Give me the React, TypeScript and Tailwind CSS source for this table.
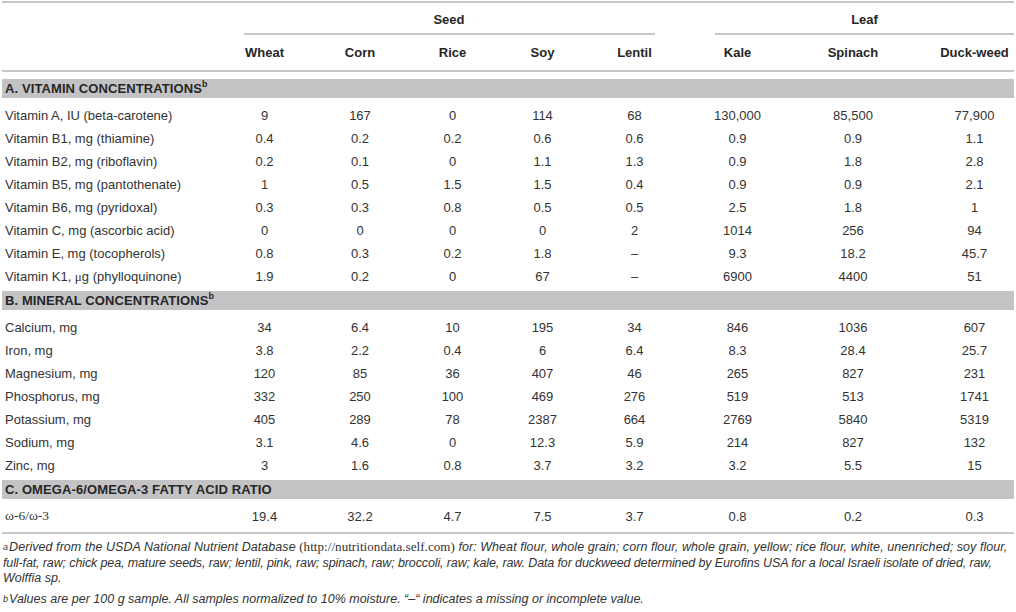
import React from "react";

const COLS = "grid grid-cols-[216px_97px_94px_91px_89px_95px_111px_120px_103px]";

type Row = { label: React.ReactNode; v: string[] };

const vitamins: Row[] = [
  { label: "Vitamin A, IU (beta-carotene)", v: ["9", "167", "0", "114", "68", "130,000", "85,500", "77,900"] },
  { label: "Vitamin B1, mg (thiamine)", v: ["0.4", "0.2", "0.2", "0.6", "0.6", "0.9", "0.9", "1.1"] },
  { label: "Vitamin B2, mg (riboflavin)", v: ["0.2", "0.1", "0", "1.1", "1.3", "0.9", "1.8", "2.8"] },
  { label: "Vitamin B5, mg (pantothenate)", v: ["1", "0.5", "1.5", "1.5", "0.4", "0.9", "0.9", "2.1"] },
  { label: "Vitamin B6, mg (pyridoxal)", v: ["0.3", "0.3", "0.8", "0.5", "0.5", "2.5", "1.8", "1"] },
  { label: "Vitamin C, mg (ascorbic acid)", v: ["0", "0", "0", "0", "2", "1014", "256", "94"] },
  { label: "Vitamin E, mg (tocopherols)", v: ["0.8", "0.3", "0.2", "1.8", "–", "9.3", "18.2", "45.7"] },
  {
    label: (
      <>
        Vitamin K1, <span className="font-['Liberation_Serif',serif]">μ</span>g (phylloquinone)
      </>
    ),
    v: ["1.9", "0.2", "0", "67", "–", "6900", "4400", "51"],
  },
];

const minerals: Row[] = [
  { label: "Calcium, mg", v: ["34", "6.4", "10", "195", "34", "846", "1036", "607"] },
  { label: "Iron, mg", v: ["3.8", "2.2", "0.4", "6", "6.4", "8.3", "28.4", "25.7"] },
  { label: "Magnesium, mg", v: ["120", "85", "36", "407", "46", "265", "827", "231"] },
  { label: "Phosphorus, mg", v: ["332", "250", "100", "469", "276", "519", "513", "1741"] },
  { label: "Potassium, mg", v: ["405", "289", "78", "2387", "664", "2769", "5840", "5319"] },
  { label: "Sodium, mg", v: ["3.1", "4.6", "0", "12.3", "5.9", "214", "827", "132"] },
  { label: "Zinc, mg", v: ["3", "1.6", "0.8", "3.7", "3.2", "3.2", "5.5", "15"] },
];

const omega: Row[] = [
  {
    label: <span className="font-['Liberation_Serif',serif] text-[13.5px]">ω-6/ω-3</span>,
    v: ["19.4", "32.2", "4.7", "7.5", "3.7", "0.8", "0.2", "0.3"],
  },
];

function DataRow({ r }: { r: Row }) {
  return (
    <div className={`${COLS} h-[23px] items-center`}>
      <div className="pl-[5px] whitespace-nowrap">{r.label}</div>
      {r.v.map((x, i) => (
        <div key={i} className={`text-center whitespace-nowrap ${i === 7 ? "pl-[20px]" : ""}`}>
          {x}
        </div>
      ))}
    </div>
  );
}

function Band({ children, top }: { children: React.ReactNode; top: string }) {
  return (
    <div className={`${top} pb-[6px] px-[2px]`}>
      <div className="h-[19px] bg-[#c3c3c5] flex items-center pl-[3px] font-bold text-[13px] text-[#262626] tracking-[0.1px]">
        {children}
      </div>
    </div>
  );
}

const headers = ["Wheat", "Corn", "Rice", "Soy", "Lentil", "Kale", "Spinach", "Duck-weed"];

export default function App() {
  return (
    <div className="w-[1016px] h-[612px] bg-white text-[#333333] text-[13px] font-['Liberation_Sans',Arial,sans-serif] overflow-hidden">
      <div className="pt-[1px] px-[2px]">
        <div className="h-[2px] bg-[#c8c8c8]" />
      </div>
      {/* group header */}
      <div className="grid grid-cols-[216px_466px_334px]">
        <div />
        <div className="flex flex-col">
          <div className="h-[30px] flex items-center justify-center pt-[4px] font-bold text-[#262626]">Seed</div>
          <div className="h-[2px] bg-[#c8c8c8] ml-[28px] mr-[27px]" />
        </div>
        <div className="flex flex-col">
          <div className="h-[30px] flex items-center justify-center pt-[4px] font-bold text-[#262626] pl-[31px]">Leaf</div>
          <div className="h-[2px] bg-[#c8c8c8] ml-[33px] mr-[2px]" />
        </div>
      </div>
      {/* column header */}
      <div className={`${COLS} h-[35px] items-center font-bold text-[#262626]`}>
        <div />
        {headers.map((h, i) => (
          <div key={h} className={`text-center whitespace-nowrap ${i === 7 ? "pl-[20px]" : ""}`}>
            {h}
          </div>
        ))}
      </div>
      <div className="px-[2px]">
        <div className="h-[2px] bg-[#c8c8c8]" />
      </div>

      <Band top="pt-[7px]">
        A. VITAMIN CONCENTRATIONS<sup className="text-[9px] -top-[5px] relative align-baseline">b</sup>
      </Band>
      {vitamins.map((r, i) => (
        <DataRow key={i} r={r} />
      ))}
      <Band top="pt-[3px]">
        B. MINERAL CONCENTRATIONS<sup className="text-[9px] -top-[5px] relative align-baseline">b</sup>
      </Band>
      {minerals.map((r, i) => (
        <DataRow key={i} r={r} />
      ))}
      <Band top="pt-[3px]">C. OMEGA-6/OMEGA-3 FATTY ACID RATIO</Band>
      {omega.map((r, i) => (
        <DataRow key={i} r={r} />
      ))}
      <div className="pt-[4px] px-[2px]">
        <div className="h-[2px] bg-[#c8c8c8]" />
      </div>

      {/* footnotes */}
      <div className="mt-[5px] pl-[3px] text-[12.5px] leading-[15.5px] italic text-[#333333] whitespace-nowrap">
        <div className="tracking-[0.06px]">
          <sup className="text-[9px] relative -top-[1px] align-baseline mr-[1px]">a</sup>Derived from the USDA National Nutrient Database{" "}
          <span className="not-italic font-['Liberation_Serif',serif] text-[13px]">(http://nutritiondata.self.com)</span> for: Wheat
          flour, whole grain; corn flour, whole grain, yellow; rice flour, white, unenriched; soy flour,
        </div>
        <div className="tracking-[-0.12px]">
          full-fat, raw; chick pea, mature seeds, raw; lentil, pink, raw; spinach, raw; broccoli, raw; kale, raw. Data for duckweed
          determined by Eurofins USA for a local Israeli isolate of dried, raw,
        </div>
        <div>Wolffia sp.</div>
        <div className="mt-[5px]">
          <sup className="text-[9px] relative -top-[1px] align-baseline mr-[1px]">b</sup>Values are per 100 g sample. All samples normalized to 10%
          moisture. “–“ indicates a missing or incomplete value.
        </div>
      </div>
    </div>
  );
}
